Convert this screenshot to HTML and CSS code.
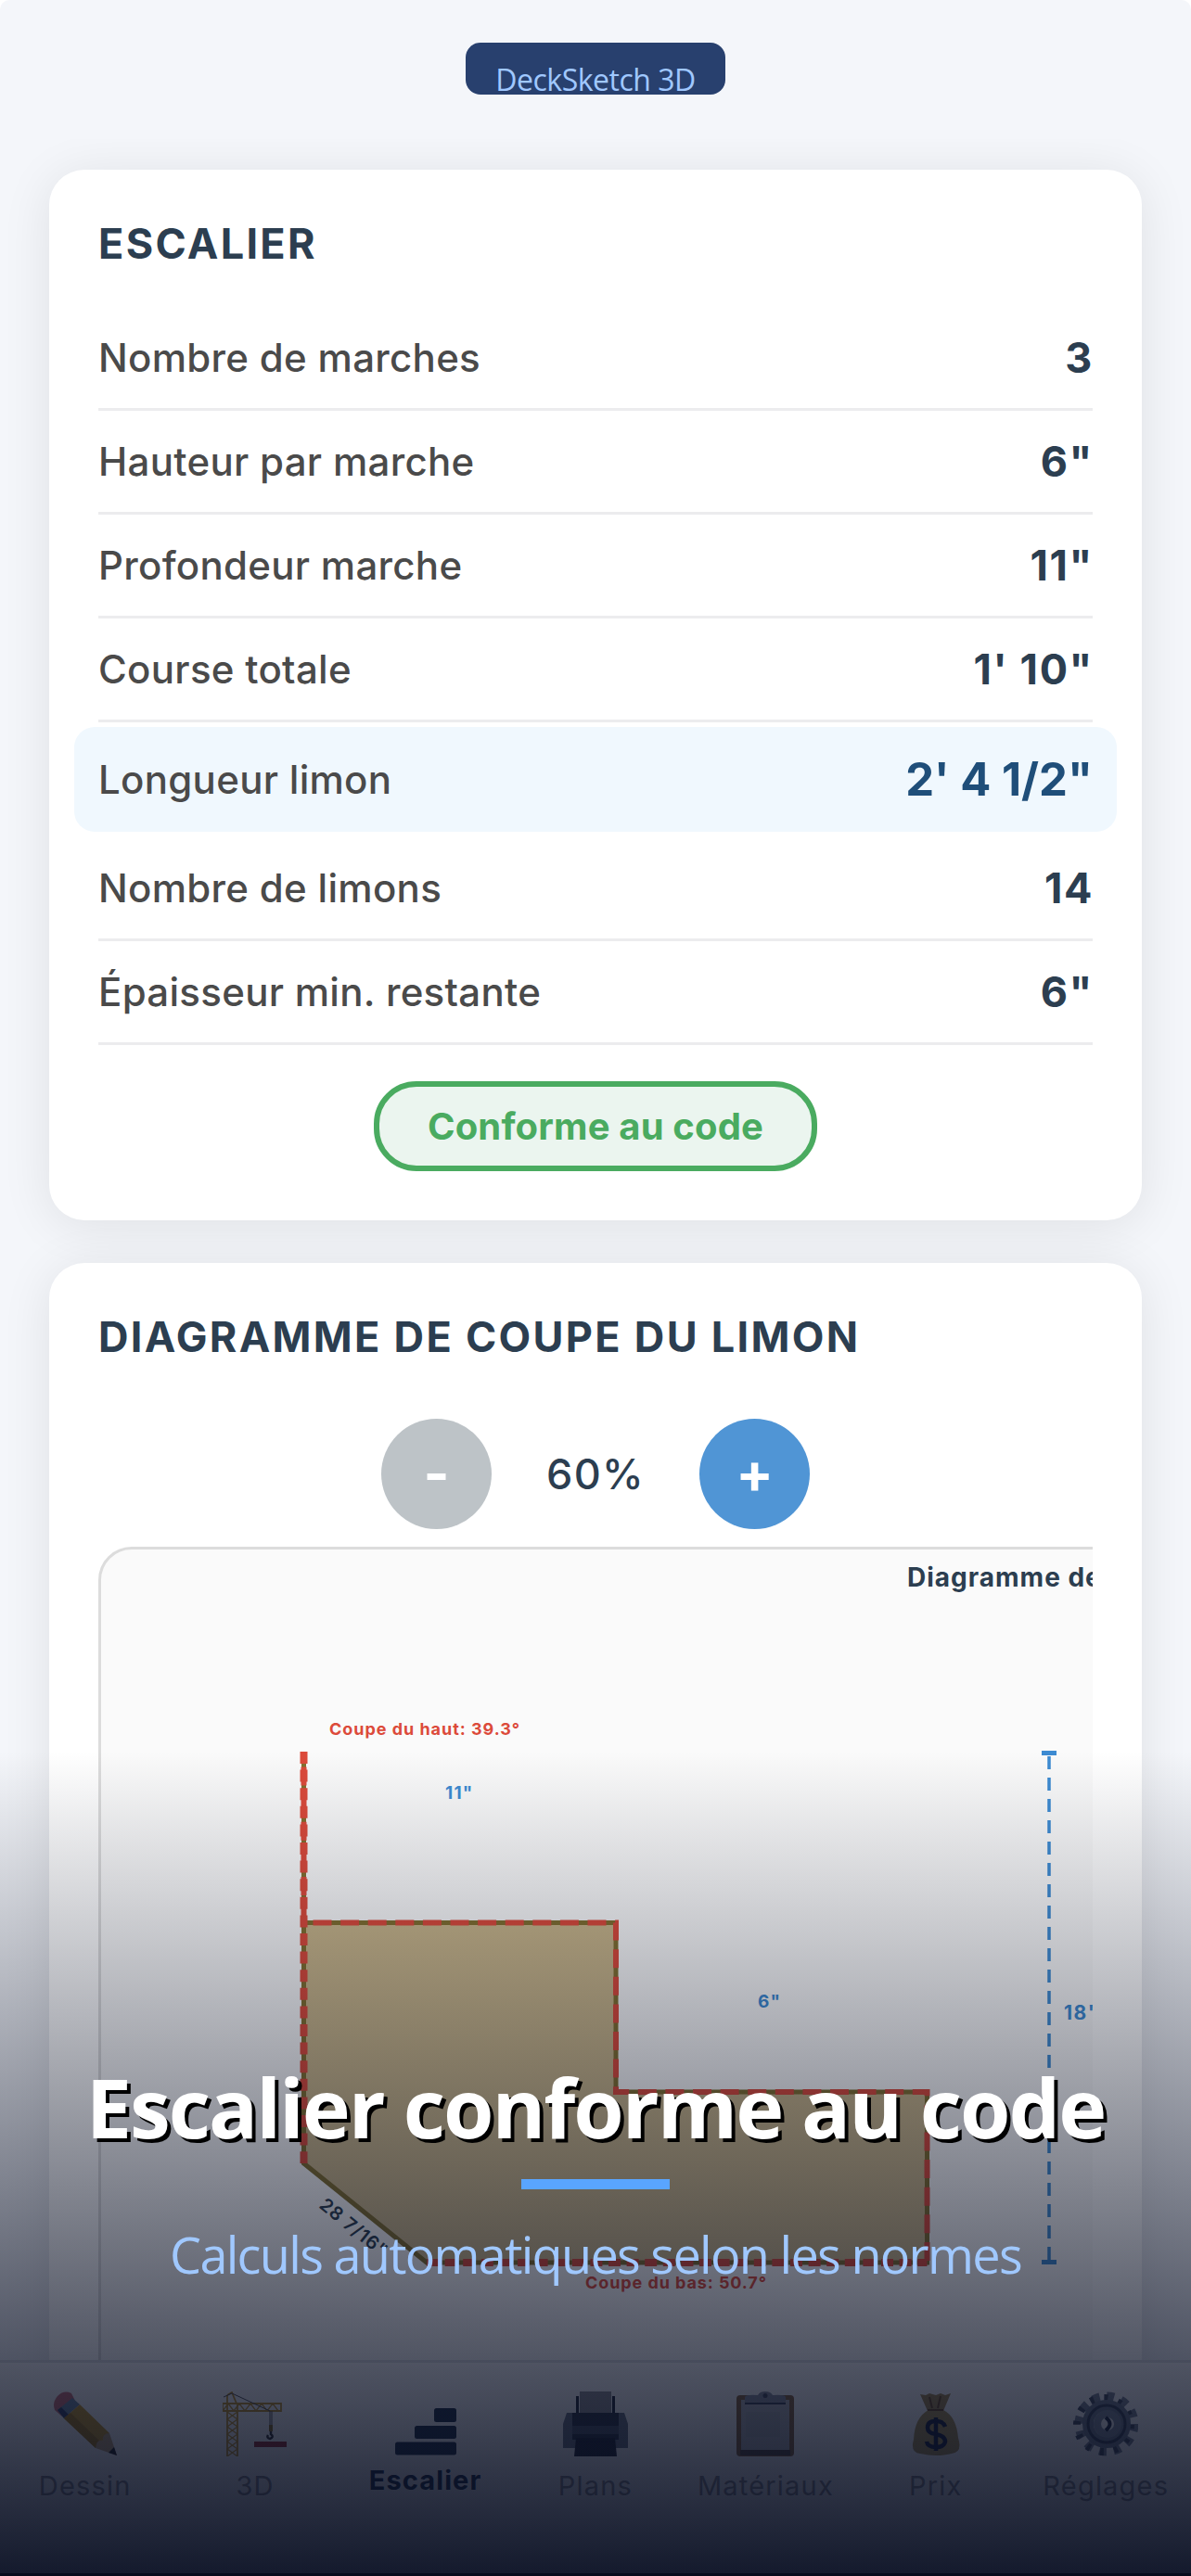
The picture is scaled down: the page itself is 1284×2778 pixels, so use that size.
FILE: index.html
```html
<!DOCTYPE html>
<html lang="fr">
<head>
  <meta charset="utf-8" />
  <meta name="viewport" content="width=device-width, initial-scale=1.0">
  <title>DeckSketch 3D - Escalier</title>
  <link rel="stylesheet" href="styles.css">
</head>

<body>
  <div class="app">
    <header class="topbar">
      <span class="brand">DeckSketch 3D</span>
    </header>

    <main class="content">
      <!-- Escalier -->
      <section class="card">
        <h2>Escalier</h2>
        <div class="row"><span>Nombre de marches</span><strong>3</strong></div>
        <div class="row"><span>Hauteur par marche</span><strong>6"</strong></div>
        <div class="row"><span>Profondeur marche</span><strong>11"</strong></div>
        <div class="row"><span>Course totale</span><strong>1' 10"</strong></div>
        <div class="row highlight"><span>Longueur limon</span><strong>2' 4 1/2"</strong></div>
        <div class="row"><span>Nombre de limons</span><strong>14</strong></div>
        <div class="row"><span>Épaisseur min. restante</span><strong>6"</strong></div>
        <div class="badge">Conforme au code</div>
      </section>

      <!-- Diagramme -->
      <section class="card">
        <h2>Diagramme de coupe du limon</h2>
        <div class="zoom-controls">
          <button class="zoom-btn" disabled>-</button>
          <span class="zoom-value">60%</span>
          <button class="zoom-btn">+</button>
        </div>
        <div class="diagram-scroll">
          <div class="diagram">
            <svg width="1900" height="1000" viewBox="0 0 1900 1000">
              <text class="d-title" x="869" y="40">Diagramme de coupe du limon</text>

              <!-- Limon -->
              <path class="wood" d="M218.5 402.5H555V585H890.5V769H351L218.5 662Z" />
              <path class="wood-edge" d="M218.5 218V662L351 769H890.5V585H555V402.5H218.5" />

              <!-- Traits de coupe -->
              <path class="cut cut-fine" d="M218.5 218V662" />
              <path class="cut cut-step" d="M218.5 402.5V218" />
              <path class="cut cut-step" d="M228.5 402.5H555V585H890.5V769" />
              <path class="cut cut-fine" d="M351 769H890.5" />

              <!-- Hauteur totale -->
              <path class="dim" d="M1022 223V766" />
              <path class="dim-cap" d="M1014 219.5H1030M1014 768.5H1030" />

              <text class="d-cut" x="246" y="200" textLength="205">Coupe du haut: 39.3°</text>
              <text class="d-cut" x="522" y="797" textLength="195">Coupe du bas: 50.7°</text>
              <text class="d-dim" x="371" y="269">11"</text>
              <text class="d-dim" x="708" y="494">6"</text>
              <text class="d-dim d-dim-big" x="1038" y="507">18"</text>
              <text class="d-len" x="0" y="0" textLength="87" transform="translate(234 709) rotate(39)">28 7/16"</text>
            </svg>
          </div>
        </div>
      </section>
    </main>

    <nav class="tabbar">
      <a class="tab">
        <svg class="icon" viewBox="0 0 70 70">
          <path fill="#c9707b" d="M2 20Q-1 12 5 5Q12-2 20 2L25 12L10 27Z" />
          <path fill="#6f8aa5" d="M5 20L21 7L29 14L12 29Z" />
          <path fill="#35436b" d="M5 20L9 17L17 25L12 29Z" />
          <path fill="#c79a2b" d="M12 29L29 14L61 45L46 61Z" />
          <path fill="#a87d1c" d="M12 29L19 23L52 55L46 61Z" />
          <path fill="#c2a67c" d="M46 61Q47 51 54 53Q53 45 61 45L69 69Z" />
          <path fill="#222" d="M69 69L60 66L66 60Z" />
        </svg>
        <span>Dessin</span>
      </a>
      <a class="tab">
        <svg class="icon" viewBox="0 0 70 70">
          <g fill="none" stroke="#c2962d" stroke-width="1.8">
            <path d="M5 70V4M16 70V13M5 4L10 1L15 13M0 13H63V21H0Z" />
            <path d="M5 22L16 30L5 38L16 46L5 54L16 62L5 70M16 22L5 30L16 38L5 46L16 54L5 62L16 70" stroke-width="1.3" />
            <path d="M0 21L6 13L12 21L18 13L24 21L30 13L36 21L42 13L48 21L54 13L60 21" stroke-width="1.3" />
          </g>
          <path fill="none" stroke="#555" d="M1 6L10 2L51 21M51 21V39M53 21V39" />
          <path fill="none" stroke="#333" stroke-width="2.5" d="M52 42V46Q56 49 51 51Q47 50 49 47" />
          <path fill="#8a7026" d="M50 36H54V43H50Z" />
          <path fill="#9a2f33" d="M34 54H69V60H34Z" />
        </svg>
        <span>3D</span>
      </a>
      <a class="tab active">
        <svg class="icon stairs" viewBox="0 0 66 51">
          <rect x="42" y="0" width="24" height="15" rx="2.5" />
          <rect x="21" y="19" width="45" height="14" rx="2.5" />
          <rect x="0" y="36.500" width="66" height="14" rx="2.5" />
        </svg>
        <span>Escalier</span>
      </a>
      <a class="tab">
        <svg class="icon" viewBox="0 0 70 70">
          <path fill="#222a3a" d="M14 5H17V24H14ZM53 5H56V24H53Z" />
          <path fill="#8f9095" d="M18 0H52V24H18Z" />
          <path fill="#6b7585" d="M4 23H66L70 35V61H0V35Z" />
          <path fill="#2c3444" d="M10 23H60V52H10Z" />
          <path fill="#4c5567" d="M10 37H60V46H10Z" />
          <path fill="#1f2533" d="M14 50H56L58 70H12Z" />
        </svg>
        <span>Plans</span>
      </a>
      <a class="tab">
        <svg class="icon" viewBox="0 0 70 70">
          <rect fill="#8a6840" x="4" y="4" width="62" height="66" rx="4" />
          <path fill="#55493d" d="M8 63H62V69H8Z" />
          <path fill="#b0b2b8" d="M9 9H61V63H9Z" />
          <path fill="#9c9fa6" d="M14 22H51V49H14Z" opacity=".4" />
          <path fill="#8b90a0" d="M13 6Q14 3 27 4Q29 0 35 0Q41 0 43 4Q56 3 57 6V12H13Z" />
          <path fill="#3f4659" d="M13 12H57V14H13Z" />
          <circle cx="35" cy="4.500" r="2.500" fill="#444b5e" />
        </svg>
        <span>Matériaux</span>
      </a>
      <a class="tab">
        <svg class="icon" viewBox="0 0 70 70">
          <path fill="#a38a52" d="M18 3L24 4L28 2L35 4L40 2L45 4L51 2L43 21H26Z" />
          <path fill="#ac9656" d="M27 20H43Q57 27 59 50Q64 66 52 67Q35 71 18 67Q7 66 11 52Q12 28 27 20Z" />
          <path fill="none" stroke="#6f4c25" stroke-width="2" d="M26 20H43M28 6L31 18M40 5L37 18" />
          <path fill="none" stroke="#17213f" stroke-width="4.5" d="M45 38Q43 32 35 32Q26 32 26 39Q26 45 35 46Q45 48 45 54Q44 60 35 60Q26 60 25 54M35 28V64" />
        </svg>
        <span>Prix</span>
      </a>
      <a class="tab">
        <svg class="icon" viewBox="0 0 70 70">
          <circle cx="36" cy="35" r="29" fill="none" stroke="#7c8696" stroke-width="11" stroke-dasharray="7.600 7.600" />
          <circle cx="33" cy="36" r="29" fill="none" stroke="#444d5e" stroke-width="8" stroke-dasharray="4 11.200" />
          <circle cx="36" cy="35" r="20" fill="none" stroke="#717c8e" stroke-width="12" />
          <circle cx="36" cy="35" r="20" fill="none" stroke="#3b4558" stroke-width="3" />
          <circle cx="37" cy="35" r="11" fill="none" stroke="#828d9e" stroke-width="8" />
          <path fill="none" stroke="#202a40" stroke-width="4" d="M35 28Q44 35 35 42" />
        </svg>
        <span>Réglages</span>
      </a>
    </nav>

    <!-- Légende promotionnelle -->
    <div class="caption">
      <h1>Escalier conforme au code</h1>
      <div class="accent"></div>
      <p>Calculs automatiques selon les normes</p>
    </div>
  </div>
</body>
</html>
```

FILE: styles.css
```css
html, body {
  margin: 0;
  padding: 0;
  background: #fff;
  font-family: Inter, Roboto, sans-serif;
}

.app {
  position: relative;
  display: flex;
  flex-direction: column;
  width: 1284px;
  height: 2778px;
  overflow: hidden;
  background: #f4f6fa;
  border-radius: 10px 10px 0 0;
}

/* Header */
.topbar {
  display: flex;
  justify-content: center;
  align-items: flex-start;
  box-sizing: border-box;
  height: 150px;
  padding-top: 46px;
}

.brand {
  box-sizing: border-box;
  width: 280px;
  height: 56px;
  padding-top: 18px;
  border-radius: 16px;
  background: #28406e;
  color: #a0c8ff;
  font-family: "Open Sans", "Noto Sans", sans-serif;
  font-size: 32px;
  line-height: 44px;
  letter-spacing: -0.500px;
  text-align: center;
  white-space: nowrap;
}

.content {
  display: flex;
  flex-direction: column;
  gap: 46px;
  box-sizing: border-box;
  height: 2395px;
  padding: 33px 53px 0;
  overflow: hidden;
}

/* Cards */
.card {
  flex: none;
  padding: 54px 53px 53px;
  border-radius: 38px;
  background: #fff;
  box-shadow: 0 6px 54px rgba(0, 0, 0, 0.09);
}

.card h2 {
  margin: 0 0 42px;
  color: #2c3e50;
  font-size: 45px;
  font-weight: 650;
  line-height: 52px;
  letter-spacing: 2.300px;
  text-transform: uppercase;
  white-space: nowrap;
}

.row {
  display: flex;
  justify-content: space-between;
  align-items: center;
  box-sizing: border-box;
  height: 112px;
  border-bottom: 3px solid #ececee;
  color: #4a4a4a;
  font-size: 42px;
  font-weight: 450;
  letter-spacing: 0.300px;
  white-space: nowrap;
}

.row strong {
  margin-right: -1px;
  color: #2c3e50;
  font-size: 45px;
  font-weight: 700;
  letter-spacing: 1.600px;
}

.row.highlight {
  height: 113px;
  margin: 5px -26px 6px;
  padding: 0 26px;
  border: none;
  border-radius: 22px;
  background: #f0f8fe;
}

.row.highlight strong {
  margin-right: 0;
  color: #1f4e79;
  font-size: 49px;
  letter-spacing: 0;
}

.badge {
  box-sizing: border-box;
  width: 478px;
  height: 97px;
  margin: 39px auto 0;
  border: 6px solid #4aab60;
  border-radius: 46px;
  background: #ebf5ef;
  color: #4aab60;
  font-size: 40px;
  font-weight: 700;
  line-height: 85px;
  letter-spacing: 0.150px;
  text-align: center;
  white-space: nowrap;
}

/* Zoom */
.zoom-controls {
  display: flex;
  justify-content: center;
  align-items: center;
  margin-top: 62px;
}

.zoom-btn {
  width: 119px;
  height: 119px;
  padding: 0 0 4px;
  border: none;
  border-radius: 50%;
  background: #5095d5;
  color: #fff;
  font-family: inherit;
  font-size: 60px;
  font-weight: 700;
}

.zoom-btn:disabled {
  background: #bdc3c7;
}

.zoom-value {
  width: 224px;
  color: #2c3e50;
  font-size: 45px;
  font-weight: 500;
  letter-spacing: 1.300px;
  text-align: center;
}

/* Diagram */
.diagram-scroll {
  margin-top: 19px;
  overflow: hidden;
}

.diagram {
  width: 1900px;
  border: 3px solid #dcdcdc;
  border-radius: 36px;
  background: #fafafa;
}

.diagram svg {
  display: block;
}

.wood {
  fill: #c9b68a;
}

.wood-edge {
  fill: none;
  stroke: #82702f;
  stroke-width: 5;
}

.cut {
  fill: none;
  stroke: #dc4a3a;
}

.cut-fine {
  stroke-width: 8;
  stroke-dasharray: 13 6.600;
}

.cut-step {
  stroke-width: 6;
  stroke-dasharray: 20 9.600;
}

.dim {
  stroke: #3d8bd2;
  stroke-width: 3.500;
  stroke-dasharray: 14 9;
}

.dim-cap {
  stroke: #3d8bd2;
  stroke-width: 5;
}

.d-title {
  fill: #2c3e50;
  font-size: 28px;
  font-weight: 650;
  letter-spacing: 1px;
}

.d-cut {
  fill: #dc4a3a;
  font-size: 18px;
  font-weight: 700;
}

.d-dim {
  fill: #3d8bd2;
  font-size: 19px;
  font-weight: 650;
  letter-spacing: 1.200px;
}

.d-dim-big {
  font-size: 21px;
  letter-spacing: 1.500px;
}

.d-len {
  fill: #2c3e50;
  font-size: 20px;
  font-weight: 600;
}

/* Tab bar */
.tabbar {
  display: grid;
  grid-template-columns: repeat(7, 1fr);
  box-sizing: border-box;
  height: 233px;
  border-top: 3px solid #dcdfe4;
  background: #f9fafb;
}

.tab {
  display: flex;
  flex-direction: column;
  align-items: center;
  padding-top: 31px;
  color: #8e8e93;
  font-size: 29px;
  letter-spacing: 1.200px;
  white-space: nowrap;
}

.icon {
  width: 70px;
  height: 70px;
}

.tab span {
  margin-top: 14px;
  line-height: 36px;
}

.stairs {
  width: 66px;
  height: 51px;
  margin-top: 18px;
  fill: #1f3047;
}

.tab.active {
  color: #1a2c48;
  font-weight: 700;
  letter-spacing: 1.100px;
}

.tab.active span {
  margin-top: 9px;
}

/* Caption over the screen */
.caption {
  position: absolute;
  left: 0;
  right: 0;
  bottom: 0;
  display: flex;
  flex-direction: column;
  align-items: center;
  box-sizing: border-box;
  height: 889px;
  padding-top: 323px;
  border-bottom: 3px solid #060b1c;
  background: linear-gradient(rgba(8, 14, 36, 0), rgba(8, 14, 34, 0.95));
  font-family: "Open Sans", "Noto Sans", sans-serif;
  white-space: nowrap;
}

.caption h1 {
  margin: 0;
  color: #fff;
  font-size: 88px;
  font-weight: 700;
  line-height: 120px;
  letter-spacing: -2px;
  text-shadow: 4px 4px 0 #000;
}

.accent {
  width: 160px;
  height: 11px;
  margin-top: 18px;
  background: #59a5ff;
}

.caption p {
  margin: 33px 0 0;
  color: #a0c8ff;
  font-size: 54px;
  line-height: 74px;
  letter-spacing: -1.700px;
}
```
